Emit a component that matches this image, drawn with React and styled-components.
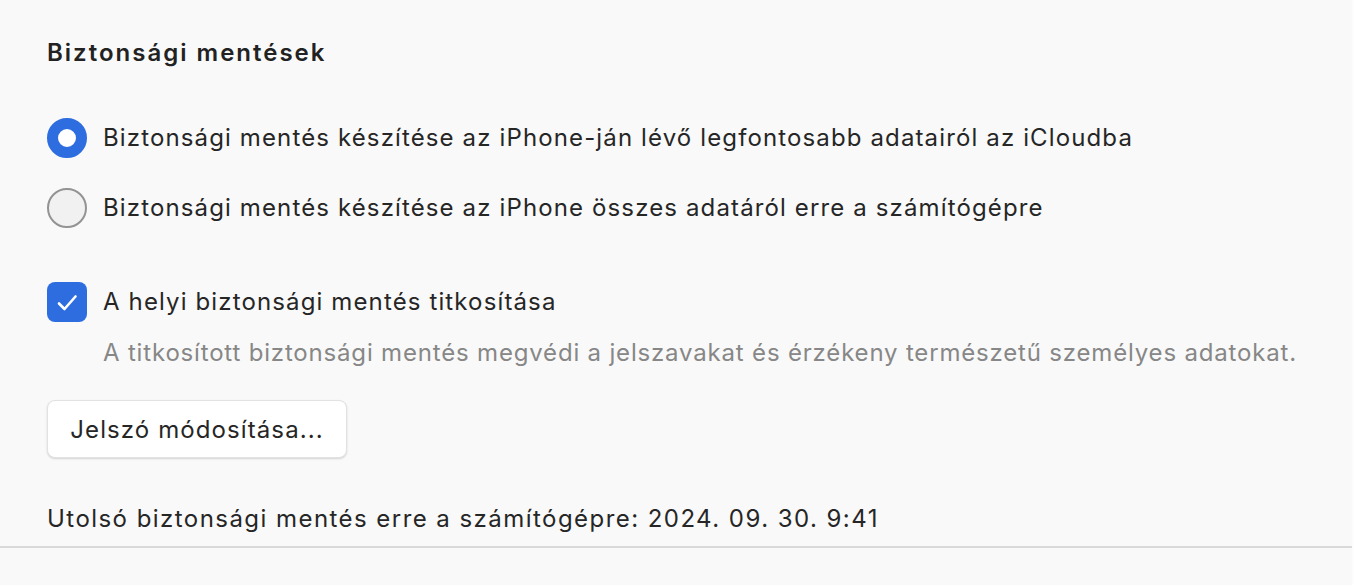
import React from 'react'
import styled, { createGlobalStyle } from 'styled-components';

const GlobalStyle = createGlobalStyle`
    html, body {
        margin: 0;
        padding: 0;
        background: #fdfdfd;
    }
    body {
        font-family: "Inter", "Liberation Sans", sans-serif;
        -webkit-font-smoothing: antialiased;
    }
`;

const App = () => {
    return (
        <>
            <GlobalStyle />
            <Page>
                <Section>
                    <Heading>Biztonsági mentések</Heading>

                    <Options>
                        <Row>
                            <Radio checked />
                            <Label>Biztonsági mentés készítése az iPhone-ján lévő legfontosabb adatairól az iCloudba</Label>
                        </Row>
                        <Row>
                            <Radio />
                            <Label>Biztonsági mentés készítése az iPhone összes adatáról erre a számítógépre</Label>
                        </Row>
                    </Options>

                    <Row $top="54px">
                        <Checkbox>
                            <svg width="40" height="40" viewBox="0 0 40 40" fill="none">
                                <path d="M12 21.5l5.5 5.5L28.5 14.5" stroke="#fff" strokeWidth="2.6" strokeLinecap="round" strokeLinejoin="round" />
                            </svg>
                        </Checkbox>
                        <Label>A helyi biztonsági mentés titkosítása</Label>
                    </Row>
                    <Hint>A titkosított biztonsági mentés megvédi a jelszavakat és érzékeny természetű személyes adatokat.</Hint>

                    <Button>Jelszó módosítása...</Button>

                    <LastBackup>Utolsó biztonsági mentés erre a számítógépre: 2024. 09. 30. 9:41</LastBackup>
                </Section>
                <Divider />
            </Page>
        </>
    )
}


const Page = styled.main`
    width: calc(100% - 2px);
    height: 585px;
    background: #f9f9f9;
    color: #262626;
`;

const Section = styled.section`
    padding: 39px 0 13px 47px;
    display: flex;
    flex-direction: column;
    align-items: flex-start;
`;

const Heading = styled.h2`
    margin: 0;
    font-size: 24px;
    line-height: 28px;
    font-weight: 600;
    letter-spacing: 2px;
    color: #222;
`;

const Options = styled.div`
    margin-top: 51px;
    display: flex;
    flex-direction: column;
    gap: 30px;
`;

const Row = styled.div`
    display: flex;
    align-items: center;
    gap: 16px;
    margin-top: ${props => props.$top || '0'};
`;

const Label = styled.span`
    font-size: 24px;
    line-height: 28px;
    letter-spacing: 1.13px;
    color: #262626;
`;

const Radio = styled.span`
    width: 40px;
    height: 40px;
    box-sizing: border-box;
    border-radius: 50%;
    flex: none;
    border: ${props => props.checked ? '11px solid #2d6de0' : '2px solid #939393'};
    background: ${props => props.checked ? '#fff' : '#f1f1f1'};
`;

const Checkbox = styled.span`
    width: 40px;
    height: 40px;
    border-radius: 8px;
    flex: none;
    background: #2d6de0;
    display: flex;
    align-items: center;
    justify-content: center;
`;

const Hint = styled.p`
    margin: 17px 0 0 56px;
    font-size: 24px;
    line-height: 28px;
    letter-spacing: 0.82px;
    color: #878787;
`;

const Button = styled.button`
    margin-top: 33px;
    width: 300px;
    height: 58px;
    background: #fff;
    border: 1px solid #e2e2e2;
    border-radius: 8px;
    box-shadow: 0 1px 2px rgba(0, 0, 0, 0.15);
    font-family: inherit;
    font-size: 24px;
    letter-spacing: 1.1px;
    color: #262626;
    padding: 0;
`;

const LastBackup = styled.p`
    margin: 47px 0 0;
    font-size: 24px;
    line-height: 28px;
    letter-spacing: 1.45px;
    color: #262626;
`;

const Divider = styled.hr`
    margin: 0;
    border: none;
    height: 2px;
    background: #d9d9d9;
`;

export default App;
